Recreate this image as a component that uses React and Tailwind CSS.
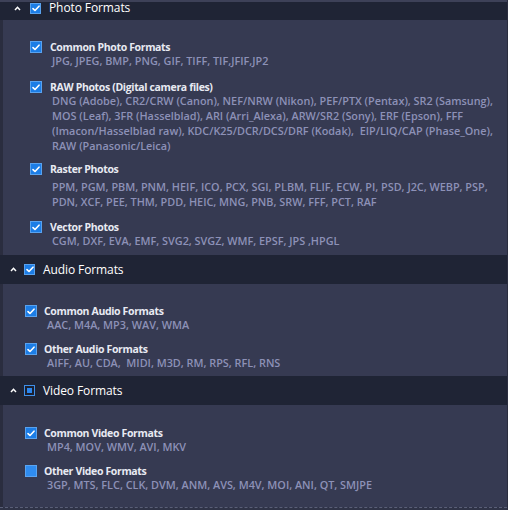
import React from "react";

const sections = [
  {
    title: "Photo Formats",
    state: "checked",
    inset: true,
    pad: "pl-[27px] pt-[21px] pb-[7px]",
    items: [
      {
        label: "Common Photo Formats",
        lines: ["JPG, JPEG, BMP, PNG, GIF, TIFF, TIF,JFIF,JP2"],
      },
      {
        label: "RAW Photos (Digital camera files)",
        gap: "mt-[13px]",
        lines: [
          "DNG (Adobe), CR2/CRW (Canon), NEF/NRW (Nikon), PEF/PTX (Pentax), SR2 (Samsung),",
          "MOS (Leaf), 3FR (Hasselblad), ARI (Arri_Alexa), ARW/SR2 (Sony), ERF (Epson), FFF",
          "(Imacon/Hasselblad raw), KDC/K25/DCR/DCS/DRF (Kodak),  EIP/LIQ/CAP (Phase_One),",
          "RAW (Panasonic/Leica)",
        ],
      },
      {
        label: "Raster Photos",
        gap: "mt-[10px]",
        spaced: true,
        lines: [
          "PPM, PGM, PBM, PNM, HEIF, ICO, PCX, SGI, PLBM, FLIF, ECW, PI, PSD, J2C, WEBP, PSP,",
          "PDN, XCF, PEE, THM, PDD, HEIC, MNG, PNB, SRW, FFF, PCT, RAF",
        ],
      },
      {
        label: "Vector Photos",
        gap: "mt-[12px]",
        lines: ["CGM, DXF, EVA, EMF, SVG2, SVGZ, WMF, EPSF, JPS ,HPGL"],
      },
    ],
  },
  {
    title: "Audio Formats",
    state: "checked",
    pad: "pl-[22px] pt-[21px] pb-[6px]",
    items: [
      { label: "Common Audio Formats", lines: ["AAC, M4A, MP3, WAV, WMA"] },
      {
        label: "Other Audio Formats",
        gap: "mt-[11px]",
        lines: ["AIFF, AU, CDA,  MIDI, M3D, RM, RPS, RFL, RNS"],
      },
    ],
  },
  {
    title: "Video Formats",
    state: "mixed",
    pad: "pl-[22px] pt-[22px] pb-[15px]",
    items: [
      { label: "Common Video Formats", lines: ["MP4, MOV, WMV, AVI, MKV"] },
      {
        label: "Other Video Formats",
        gap: "mt-[11px]",
        unchecked: true,
        lines: ["3GP, MTS, FLC, CLK, DVM, ANM, AVS, M4V, MOI, ANI, QT, SMJPE"],
      },
    ],
  },
];

const Check = ({ size = 12, state = "checked" }) => {
  if (state === "mixed") {
    return (
      <span className="flex items-center justify-center w-[11px] h-[11px] border border-[#3f8fe8] bg-[#1b2030]">
        <span className="w-[5px] h-[5px] bg-[#2a86ee]"></span>
      </span>
    );
  }
  if (state === "blank") {
    return (
      <span className="block w-[12px] h-[12px] bg-[#2f8cf0] border border-[#5aa4f2]"></span>
    );
  }
  return (
    <span
      className="flex items-center justify-center bg-[#1c7de6] border border-[#5aa2ee]"
      style={{ width: size, height: size }}
    >
      <svg width="8" height="7" viewBox="0 0 8 7" fill="none">
        <path
          d="M1 3.6 L3 5.5 L7 1.2"
          stroke="#ffffff"
          strokeWidth="1.6"
          strokeLinecap="round"
          strokeLinejoin="round"
        />
      </svg>
    </span>
  );
};

const Chevron = () => (
  <svg width="7" height="5" viewBox="0 0 7 5" fill="none">
    <path d="M1 4 L3.5 1.3 L6 4" stroke="#ffffff" strokeWidth="1.5" />
  </svg>
);

const Section = ({ section, first }) => {
  const inset = section.inset;
  return (
    <div>
      {/* Header bar */}
      <div
        className={`flex bg-[#1f2435] ${
          first ? "h-[18px] items-start" : "h-[29px] items-center"
        } ${inset ? "pl-[11px]" : "pl-[7px]"}`}
      >
        <div className={`flex items-center ${first ? "h-[12px]" : ""}`}>
          <span className="w-[12px] flex justify-center">
            <Chevron />
          </span>
          <span className={inset ? "ml-[7px]" : "ml-[5px]"}>
            <Check size={11} state={section.state} />
          </span>
          <span className="ml-[8px] text-[12px] tracking-[-0.1px] text-white leading-none">
            {section.title}
          </span>
        </div>
      </div>

      {/* Items */}
      <div
        className={`bg-[#363a52] border-l-[3px] border-[#2a2d3f] ${section.pad} flex flex-col`}
      >
        {section.items.map((item) => (
          <div key={item.label} className={`flex flex-col ${item.gap || ""}`}>
            <div className="flex items-center h-[12px]">
              <Check state={item.unchecked ? "blank" : "checked"} />
              <span
                className={`${
                  inset ? "ml-[8px]" : "ml-[7px]"
                } text-[10.5px] tracking-[-0.35px] font-bold text-[#e8eaf2] leading-[12px] whitespace-nowrap`}
              >
                {item.label}
              </span>
            </div>
            <div
              className={`pl-[22px] ${
                item.spaced ? "mt-[4px]" : ""
              } text-[10.85px] font-semibold text-[#8d91b7] leading-[15px]`}
            >
              {item.lines.map((l, i) => (
                <div key={i} className="whitespace-pre">
                  {l}
                </div>
              ))}
            </div>
          </div>
        ))}
      </div>
    </div>
  );
};

export default function App() {
  return (
    <div
      className="w-[510px] h-[512px] overflow-hidden bg-white"
      style={{ fontFamily: '"Open Sans", "Noto Sans", sans-serif' }}
    >
      <div className="w-[508px] bg-[#363a52] border-r border-[#2a2d3f]">
        <div className="h-[2px] bg-[#3d4158]"></div>
        {sections.map((s, i) => (
          <Section key={s.title} section={s} first={i === 0} />
        ))}
        <div className="h-[3px] border-t border-dashed border-[#5a5f78] bg-[#2f3347]"></div>
      </div>
    </div>
  );
}
